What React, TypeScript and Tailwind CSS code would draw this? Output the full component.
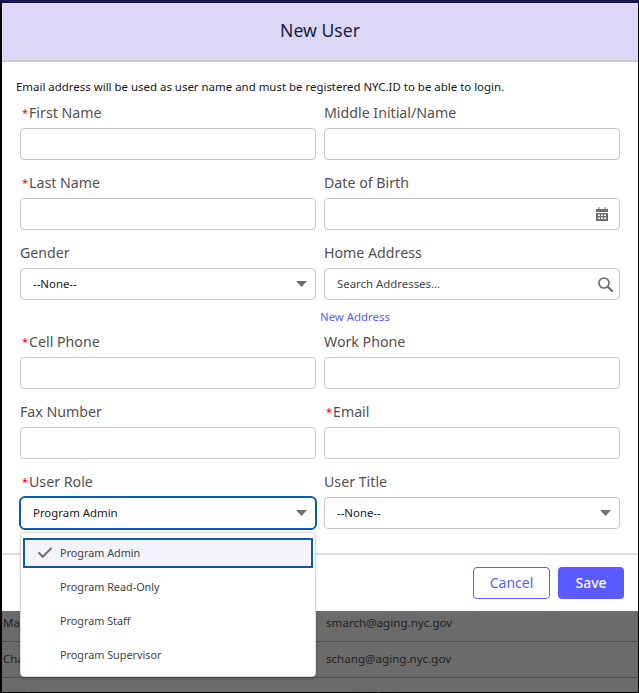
import { FC, ReactNode } from 'react';
import { Check } from 'lucide-react';

const font = '[font-family:"Noto_Sans","Open_Sans",sans-serif]';

const Label: FC<{ text: string; required?: boolean }> = ({ text, required }) => (
  <div className="h-[21px] pb-[2px] flex items-center text-[14.2px] leading-[19px] text-[#54504e]">
    {required && <span className="text-[#ea001e] pl-[2px] w-[9px] text-[11px]">*</span>}
    {text}
  </div>
);

const Box: FC<{ children?: ReactNode; focus?: boolean }> = ({ children, focus }) => (
  <div
    className={`bg-white flex items-center relative text-[11.4px] text-[#181818] pl-[12px] pr-[8px] ${
      focus
        ? 'mt-[3px] h-[34px] -mb-px -mx-px rounded-[6px] border-2 border-[#0b5cab]'
        : 'mt-[4px] h-[32px] rounded-[4px] border border-[#c9c9c9]'
    }`}
  >
    {children}
  </div>
);

const Caret = () => (
  <svg width="11" height="6" viewBox="0 0 11 6" className="ml-auto">
    <path d="M0 0h11L5.5 6z" fill="#706e6b" />
  </svg>
);

const CalendarIcon = () => (
  <svg width="12" height="14" viewBox="0 0 12 14" className="ml-auto mr-[3px]">
    <path d="M2.5 0h1v2h5V0h1v2H12v3H0V2h2.5z" fill="#706e6b" />
    <path
      fillRule="evenodd"
      d="M0 6h12v8H0zM2 7.500v1.500h2V7.500zM5 7.500v1.500h2V7.500zM8 7.500v1.500h2V7.500zM2 10.500V12h2v-1.500zM5 10.500V12h2v-1.500zM8 10.500V12h2v-1.500z"
      fill="#706e6b"
    />
  </svg>
);

const SearchIcon = () => (
  <svg width="15" height="15" viewBox="0 0 15 15" fill="none" stroke="#706e6b" className="ml-auto -mr-[2px] mt-px">
    <circle cx="6" cy="6" r="5" strokeWidth="1.7" />
    <path d="M9.700 9.700L14 14" strokeWidth="2.200" strokeLinecap="round" />
  </svg>
);

const Field: FC<{ label: string; required?: boolean; children?: ReactNode; focus?: boolean }> = ({
  label,
  required,
  children,
  focus,
}) => (
  <div>
    <Label text={label} required={required} />
    <Box focus={focus}>{children}</Box>
  </div>
);

const options = ['Program Admin', 'Program Read-Only', 'Program Staff', 'Program Supervisor'];

const App: FC = () => {
  return (
    <div className={`w-[639px] h-[693px] overflow-hidden bg-black relative ${font}`}>
      <div className="h-[3px] bg-[#1a1650]" />
      <div className="ml-[2px] mr-px h-[689px] bg-[#6b6b6b] relative">
        {/* Modal */}
        <div className="bg-white h-[608px] flex flex-col">
          <div className="h-[59px] bg-[#dcd6f7] border-b-2 border-[#c9c9c9] flex items-center justify-center pb-[3px] text-[17.6px] text-[#181c3a]">
            New User
          </div>
          <div className="h-[41px] flex items-end pl-[14px] pb-[8px] text-[11.45px] leading-[16px] text-[#181818]">
            Email address will be used as user name and must be registered NYC.ID to be able to login.
          </div>
          <div className="px-[18px] flex-1">
            <div className="grid grid-cols-2 gap-x-[8px] gap-y-[13px]">
              <Field label="First Name" required />
              <Field label="Middle Initial/Name" />
              <Field label="Last Name" required />
              <Field label="Date of Birth">
                <CalendarIcon />
              </Field>
              <Field label="Gender">
                --None--
                <Caret />
              </Field>
              <div>
                <Label text="Home Address" />
                <Box>
                  <span className="text-[#444]">Search Addresses...</span>
                  <SearchIcon />
                </Box>
                <div className="-ml-[4px] h-[17px] mt-[8px] -mb-[6px] flex items-center text-[11.4px] text-[#5a5cff]">New Address</div>
              </div>
              <Field label="Cell Phone" required />
              <Field label="Work Phone" />
              <Field label="Fax Number" />
              <Field label="Email" required />
              <Field label="User Role" required focus>
                Program Admin
                <Caret />
              </Field>
              <Field label="User Title">
                --None--
                <Caret />
              </Field>
            </div>
          </div>
          <div className="h-[58px] border-t-2 border-[#dcdcdc] flex items-center justify-end gap-[8px] pr-[14px] pb-px">
            <button className="w-[77px] h-[32px] rounded-[4px] border border-[#5a5cff] bg-white text-[14px] text-[#5a5cff]">
              Cancel
            </button>
            <button className="w-[66px] h-[32px] rounded-[4px] bg-[#5a5cff] text-[14px] font-medium text-white">
              Save
            </button>
          </div>
        </div>

        {/* Table behind the modal */}
        <div className="text-[11.6px] text-[#1f1f1f]">
          <div className="h-[31px] border-b border-[#4f4f4f] flex items-center pb-[7px]">
            <span className="w-[324px] pl-px">Marie</span>
            <span>smarch@aging.nyc.gov</span>
          </div>
          <div className="h-[36px] border-b border-[#4f4f4f] flex items-center pb-[2px]">
            <span className="w-[324px] pl-px">Charles</span>
            <span>schang@aging.nyc.gov</span>
          </div>
          <div className="flex pt-[9px]">
            <span className="w-[324px] pl-px">Patrick</span>
            <span>pmatthe@aging.nyc.gov</span>
          </div>
        </div>

        {/* Dropdown menu */}
        <div className="absolute left-[18px] top-[529px] w-[296px] h-[145px] bg-white border border-[#dcdcdc] rounded-[4px] shadow-[0_2px_3px_rgba(0,0,0,0.16)] pt-[5px] px-[2px] text-[10.8px] text-[#444]">
          {options.map((o, i) =>
            i === 0 ? (
              <div key={o} className="h-[30px] mb-[2px] border-2 border-[#0b5cab] bg-[#f3f3fb] pl-[35px] flex items-center relative">
                <Check size={18} strokeWidth={2.6} className="absolute left-[11px] text-[#706e6b]" />
                {o}
              </div>
            ) : (
              <div key={o} className="h-[34px] flex items-center pl-[37px]">
                {o}
              </div>
            ),
          )}
        </div>
      </div>
    </div>
  );
};

export default App;
